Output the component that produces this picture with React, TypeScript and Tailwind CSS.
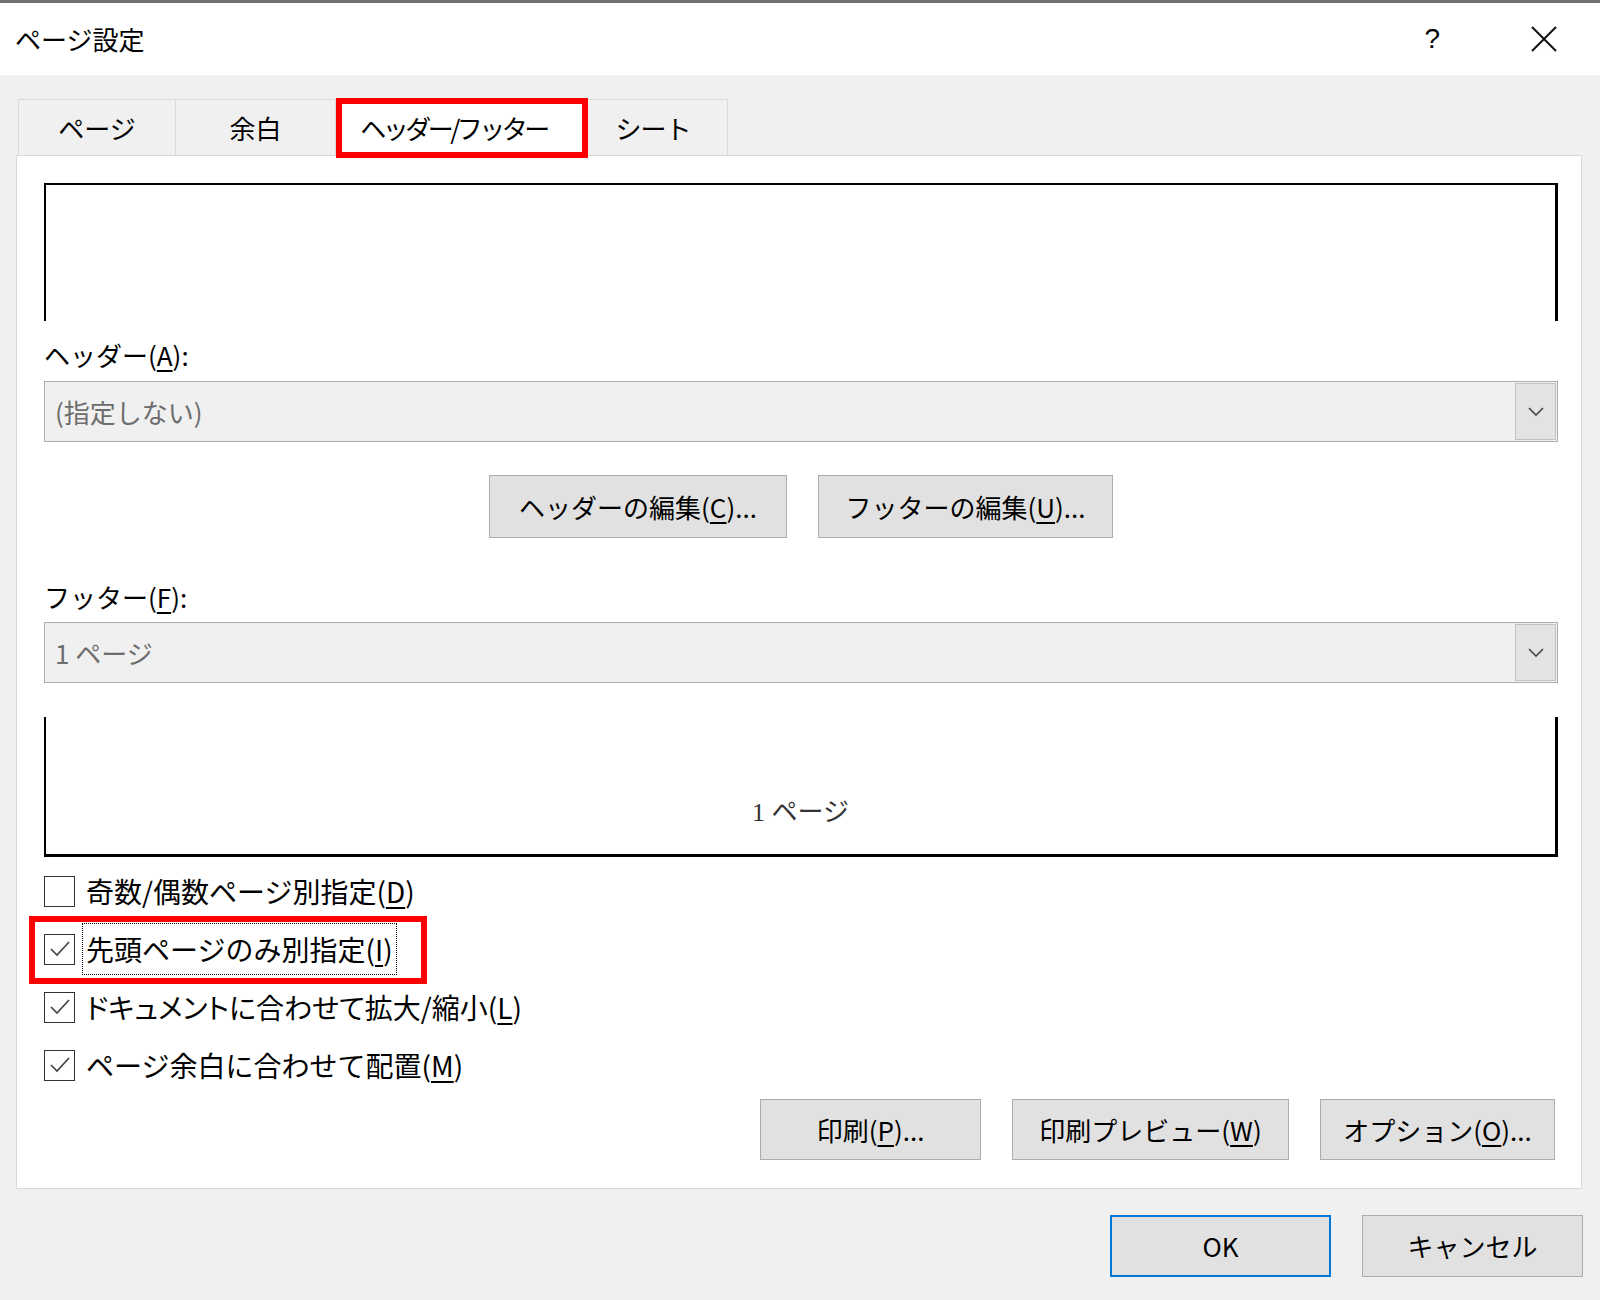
import React from 'react';

const ui = "font-['Noto_Sans_CJK_JP','Liberation_Sans',sans-serif]";

function U({ ch }: { ch: string }) {
  return <span className="underline underline-offset-[4px] decoration-[1.5px]">{ch}</span>;
}

function Chevron() {
  return (
    <svg width="18" height="11" viewBox="0 0 18 11">
      <path d="M2 2 L9 9 L16 2" fill="none" stroke="#4a4a4a" strokeWidth="1.7" />
    </svg>
  );
}

function Combo({ text }: { text: string }) {
  return (
    <div className="h-[61px] border border-[#adadad] bg-[#f0f0f0] flex items-stretch">
      <span className="flex-1 pl-[10px] flex items-center text-[26px] leading-[34px] text-[#6d6d6d]">{text}</span>
      <div className="w-[41px] m-[1px] border border-[#c2c2c2] bg-[#e3e3e3] flex items-center justify-center">
        <Chevron />
      </div>
    </div>
  );
}

function Btn({ children, w, primary }: { children: React.ReactNode; w: number; primary?: boolean }) {
  return (
    <button
      className={`h-full flex items-center justify-center text-[26px] leading-[34px] text-black bg-[#e1e1e1] ${
        primary ? 'border-2 border-[#0078d7]' : 'border border-[#adadad]'
      }`}
      style={{ width: w }}
    >
      {children}
    </button>
  );
}

function CheckBox({ checked }: { checked: boolean }) {
  return (
    <span className="w-[31px] h-[31px] border-[1.5px] border-[#333] bg-white flex items-center justify-center shrink-0">
      {checked && (
        <svg width="28" height="28" viewBox="0 0 28 28">
          <path d="M5 14 L11 20 L23 7" fill="none" stroke="#444" strokeWidth="1.7" />
        </svg>
      )}
    </span>
  );
}

function CheckRow({
  checked,
  label,
  ch,
  focused,
  marked,
  condensed,
}: {
  checked: boolean;
  label: string;
  ch: string;
  focused?: boolean;
  marked?: boolean;
  condensed?: boolean;
}) {
  return (
    <div className="relative h-[58px] flex items-center">
      <CheckBox checked={checked} />
      <span
        className={`ml-[7px] px-[3px] h-[52px] flex items-center text-[28px] leading-[34px] text-black border ${
          focused ? 'border-dotted border-black' : 'border-transparent'
        } ${condensed ? "[font-feature-settings:'palt']" : ''}`}
      >
        {label}(<U ch={ch} />)
      </span>
      {marked && (
        <div className="absolute left-[-15px] top-[-4px] w-[398px] h-[68px] border-[6px] border-[#ff0000] pointer-events-none" />
      )}
    </div>
  );
}

export default function App() {
  return (
    <div className={`w-[1600px] h-[1300px] bg-[#f0f0f0] overflow-hidden ${ui}`}>
      {/* title bar */}
      <div className="h-[75px] bg-white border-t-[3px] border-[#707070] flex items-center">
        <span className="pl-[15px] text-[26px] leading-[34px] text-black">ページ設定</span>
        <div className="ml-auto flex items-center pr-[42px]">
          <span className="font-['Liberation_Sans',sans-serif] text-[28px] leading-[34px] text-black">?</span>
          <svg className="ml-[90px]" width="28" height="28" viewBox="0 0 28 28">
            <path d="M2 2 L26 26 M26 2 L2 26" stroke="#111" strokeWidth="2" />
          </svg>
        </div>
      </div>

      {/* tabs */}
      <div className="mt-[24px] pl-[18px] flex items-end h-[56px]">
        <div className="w-[158px] h-[56px] border border-b-0 border-[#d9d9d9] flex items-center justify-center text-[26px] leading-[34px]">
          ページ
        </div>
        <div className="w-[160px] h-[56px] border border-b-0 border-l-0 border-[#d9d9d9] flex items-center justify-center text-[26px] leading-[34px]">
          余白
        </div>
        <div className="relative z-10 w-[251px] h-[58px] -mb-px bg-white border border-b-0 border-[#d9d9d9] flex items-center justify-center pr-[16px] text-[26px] leading-[34px] tracking-[-3.5px]">
          ヘッダー/フッター
          <div className="absolute left-[-1px] top-[-1px] right-[-2px] bottom-[-2px] border-[6px] border-[#ff0000]" />
        </div>
        <div className="w-[141px] h-[56px] border border-b-0 border-l-0 border-[#d9d9d9] flex items-center justify-center pr-[8px] text-[26px] leading-[34px] tracking-[-1px]">
          シート
        </div>
      </div>

      {/* panel */}
      <div className="ml-[16px] w-[1566px] h-[1034px] bg-white border border-[#d9d9d9] pl-[27px] pr-[23px] pt-[27px] flex flex-col">
        <div className="h-[138px] border-t-2 border-l-2 border-r-[3px] border-black" />

        <div className="mt-[17px] h-[34px] text-[26px] leading-[34px] text-black">
          ヘッダー(<U ch="A" />):
        </div>
        <div className="mt-[9px]">
          <Combo text="(指定しない)" />
        </div>

        <div className="mt-[33px] h-[63px] flex justify-center gap-[31px]">
          <Btn w={298}>
            ヘッダーの編集(<U ch="C" />)...
          </Btn>
          <Btn w={295}>
            フッターの編集(<U ch="U" />)...
          </Btn>
        </div>

        <div className="mt-[42px] h-[34px] text-[26px] leading-[34px] text-black">
          フッター(<U ch="F" />):
        </div>
        <div className="mt-[8px]">
          <Combo text="1 ページ" />
        </div>

        <div className="mt-[34px] h-[140px] border-l-2 border-r-[3px] border-b-[3px] border-black flex flex-col justify-end items-center pb-[24px]">
          <span className="font-['Liberation_Serif','Noto_Sans_CJK_JP',serif] text-[26px] leading-[34px] text-[#333]">
            1 ページ
          </span>
        </div>

        <div className="mt-[5px] flex flex-col">
          <CheckRow checked={false} label="奇数/偶数ページ別指定" ch="D" />
          <CheckRow checked label="先頭ページのみ別指定" ch="I" focused marked />
          <CheckRow checked label="ドキュメントに合わせて拡大/縮小" ch="L" condensed />
          <CheckRow checked label="ページ余白に合わせて配置" ch="M" />
        </div>

        <div className="mt-[5px] h-[61px] flex justify-end gap-[31px] pr-[3px]">
          <Btn w={221}>
            印刷(<U ch="P" />)...
          </Btn>
          <Btn w={277}>
            印刷プレビュー(<U ch="W" />)
          </Btn>
          <Btn w={235}>
            オプション(<U ch="O" />)...
          </Btn>
        </div>
      </div>

      {/* dialog buttons */}
      <div className="mt-[26px] h-[62px] flex justify-end gap-[31px] pr-[17px]">
        <Btn w={221} primary>
          OK
        </Btn>
        <Btn w={221}>キャンセル</Btn>
      </div>
    </div>
  );
}
